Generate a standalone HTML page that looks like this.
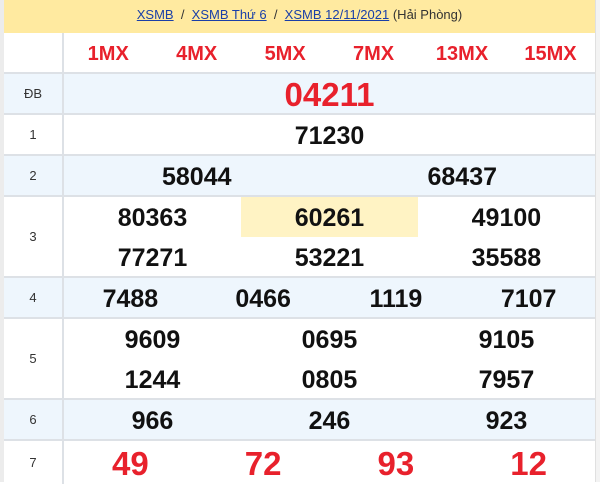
<!DOCTYPE html>
<html><head><meta charset="utf-8"><style>
*{margin:0;padding:0;box-sizing:border-box}
body{width:600px;height:482px;overflow:hidden;background:#fff;font-family:"Liberation Sans",Arial,sans-serif;position:relative}
.lb{position:absolute;left:0;top:0;width:4px;height:482px;background:#ececec}
.rb{position:absolute;right:0;top:0;width:5px;height:482px;background:#f3f3f3;border-left:1px solid #e0e0e0}
.hd{position:absolute;left:4px;top:0;width:591px;height:33px;background:#ffeaa0;text-align:center;font-size:13px;line-height:30px;color:#333}
.hd a{color:#1a3fa8;text-decoration:underline}
.row{position:absolute;left:4px;width:591px;border-bottom:2px solid #dde1e6;display:flex}
.lab{width:60px;border-right:2px solid #dde1e6;font-size:13px;color:#333;display:flex;align-items:center;justify-content:center}
.cells{flex:1;display:flex;flex-wrap:wrap}
.c{display:flex;align-items:center;justify-content:center;font-weight:bold;font-size:25px;color:#111;height:39px;padding-top:3px}
.blue{background:#eef6fd}
.red{color:#e8212c}
.h{font-size:20px;padding-top:4px}
</style></head><body>
<div class="lb"></div><div class="rb"></div>
<div class="hd"><a>XSMB</a> &nbsp;/&nbsp; <a>XSMB Thứ 6</a> &nbsp;/&nbsp; <a>XSMB 12/11/2021</a> (Hải Phòng)</div>
<div class="row" style="top:33px;height:41px"><div class="lab"></div><div class="cells">
<div class="c red h" style="width:16.66%">1MX</div><div class="c red h" style="width:16.66%">4MX</div><div class="c red h" style="width:16.66%">5MX</div><div class="c red h" style="width:16.66%">7MX</div><div class="c red h" style="width:16.66%">13MX</div><div class="c red h" style="width:16.66%">15MX</div></div></div>
<div class="row blue" style="top:74px;height:41px"><div class="lab">ĐB</div><div class="cells"><div class="c red" style="width:100%;font-size:33px">04211</div></div></div>
<div class="row" style="top:115px;height:41px"><div class="lab">1</div><div class="cells"><div class="c" style="width:100%">71230</div></div></div>
<div class="row blue" style="top:156px;height:41px"><div class="lab">2</div><div class="cells"><div class="c" style="width:50%">58044</div><div class="c" style="width:50%">68437</div></div></div>
<div class="row" style="top:197px;height:81px"><div class="lab">3</div><div class="cells">
<div class="c" style="width:33.33%;height:40px">80363</div><div class="c" style="width:33.33%;height:40px;background:#fff3c4">60261</div><div class="c" style="width:33.33%;height:40px">49100</div>
<div class="c" style="width:33.33%">77271</div><div class="c" style="width:33.33%">53221</div><div class="c" style="width:33.33%">35588</div></div></div>
<div class="row blue" style="top:278px;height:41px"><div class="lab">4</div><div class="cells"><div class="c" style="width:25%">7488</div><div class="c" style="width:25%">0466</div><div class="c" style="width:25%">1119</div><div class="c" style="width:25%">7107</div></div></div>
<div class="row" style="top:319px;height:81px"><div class="lab">5</div><div class="cells">
<div class="c" style="width:33.33%;height:40px">9609</div><div class="c" style="width:33.33%;height:40px">0695</div><div class="c" style="width:33.33%;height:40px">9105</div>
<div class="c" style="width:33.33%">1244</div><div class="c" style="width:33.33%">0805</div><div class="c" style="width:33.33%">7957</div></div></div>
<div class="row blue" style="top:400px;height:41px"><div class="lab">6</div><div class="cells"><div class="c" style="width:33.33%">966</div><div class="c" style="width:33.33%">246</div><div class="c" style="width:33.33%">923</div></div></div>
<div class="row" style="top:441px;height:43px;border-bottom:none"><div class="lab">7</div><div class="cells"><div class="c red" style="width:25%;font-size:33px;height:43px">49</div><div class="c red" style="width:25%;font-size:33px;height:43px">72</div><div class="c red" style="width:25%;font-size:33px;height:43px">93</div><div class="c red" style="width:25%;font-size:33px;height:43px">12</div></div></div>
</body></html>
